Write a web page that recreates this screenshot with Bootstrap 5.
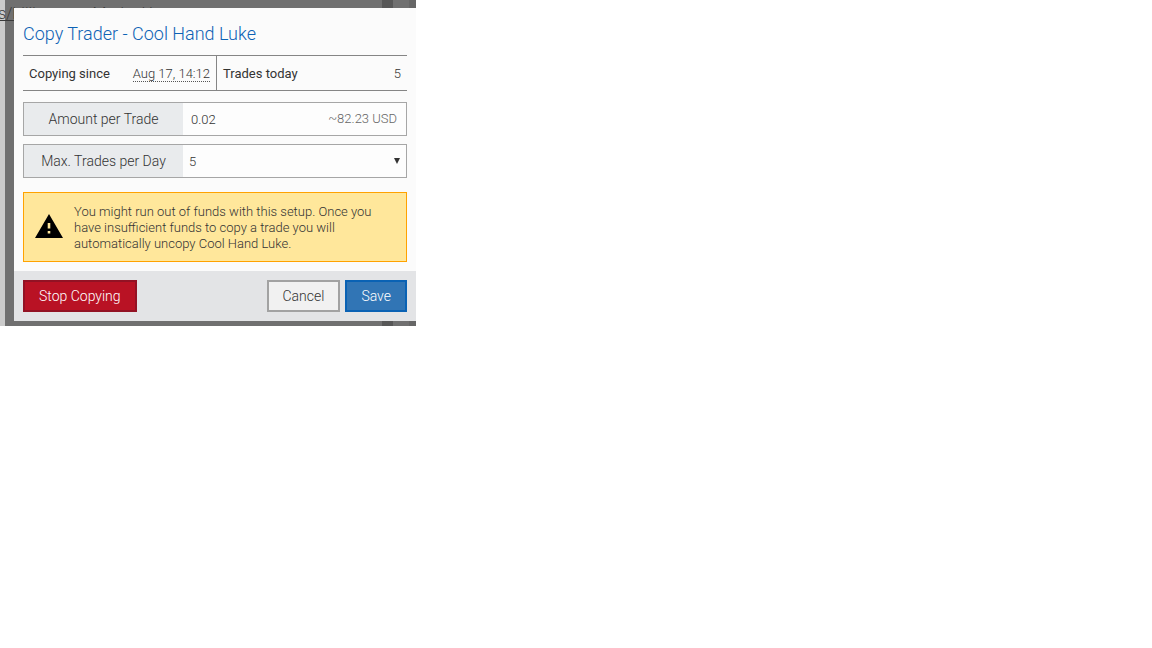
<!DOCTYPE html>
<html lang="en">
<head>
<meta charset="utf-8">
<meta name="viewport" content="width=device-width, initial-scale=1">
<title>Copy Trader</title>
<link href="https://cdn.jsdelivr.net/npm/bootstrap@5.3.0/dist/css/bootstrap.min.css" rel="stylesheet">
<style>
  body { font-family: Roboto, "Liberation Sans", sans-serif; font-size: 13px; line-height: 16px; font-weight: 300; color: #333; background: #fff; }
  .stage { max-width: 416px; padding: 8px 0 5px 14px;
    background: linear-gradient(90deg, #cbcbcb 5px, #707070 5px, #707070 calc(100% - 34px), #575757 calc(100% - 34px), #575757 calc(100% - 23px), #707070 calc(100% - 23px), #707070 calc(100% - 7px), #666 calc(100% - 7px)); }
  .behind { top: 5px; left: -2px; font-size: 16px; line-height: 18px; color: #3a3a3a; }
  .dialog { background: #fbfbfb; }
  .main { padding: 14px 9px 9px; }
  .title { font-size: 18px; line-height: 24px; font-weight: 300; color: #0d62b5; margin-bottom: 9px; }
  .facts { border-top: 1px solid #858585; border-bottom: 1px solid #858585; line-height: 36px; height: 36px; margin-bottom: 11px; }
  .facts dt { font-weight: 400; }
  .facts dd { font-weight: 300; }
  .fact { padding: 0 6px; }
  .fact:first-child { border-right: 1px solid #858585; flex: 0 0 194px; }
  .since { border-bottom: 1px dotted #555; line-height: 15px; margin-top: 2px; }
  .field { border: 1px solid #a6a6a6; height: 34px; margin-bottom: 8px; }
  .field label { width: 159px; background: #e9ebed; font-size: 14px; line-height: 32px; text-align: center; }
  .field input, .field select { border: 0; background: #fdfdfd; font-size: 13px; font-weight: 300; color: #333; line-height: 16px; min-width: 0; border-radius: 0; outline-offset: -2px; }
  .field input { padding: 2px 8px 0; }
  .field select { appearance: none; padding: 2px 6px 0; }
  .usd { background: #fdfdfd; color: #666; line-height: 32px; padding-right: 9px; }
  .arrow { right: 6px; top: 13px; pointer-events: none; }
  .warn { background: #ffe79b; border: 1px solid #ffa200; padding: 11px 12px 9px 11px; margin-top: 14px; gap: 11px; color: #333; }
  .foot { background: #e3e4e6; padding: 9px; gap: 5px; }
  .act { border: 2px solid; border-radius: 0; font-size: 14px; line-height: 16px; font-weight: 300; padding: 6px 14px; }
  .stop, .stop:hover { background: #b91224; border-color: #931224; color: #fff; }
  .cancel, .cancel:hover { background: #f1f1f1; border-color: #a2a2a2; color: #333; }
  .save, .save:hover { background: #3175b5; border-color: #0a62b4; color: #fff; }
</style>
</head>
<body>
<div class="stage position-relative overflow-hidden">
  <a href="#" class="behind position-absolute text-nowrap">s/bilibersons Mader Has</a>
  <form class="dialog position-relative">
    <div class="main">
      <h1 class="title">Copy Trader - Cool Hand Luke</h1>
      <dl class="facts d-flex">
        <div class="fact d-flex justify-content-between"><dt>Copying since</dt><dd class="mb-0 d-flex align-items-center"><span class="since">Aug 17, 14:12</span></dd></div>
        <div class="fact flex-grow-1 d-flex justify-content-between"><dt>Trades today</dt><dd class="mb-0">5</dd></div>
      </dl>
      <div class="field d-flex">
        <label for="amount" class="flex-shrink-0">Amount per Trade</label>
        <input id="amount" type="text" class="flex-grow-1" value="0.02">
        <span class="usd text-nowrap">~82.23 USD</span>
      </div>
      <div class="field d-flex position-relative">
        <label for="max" class="flex-shrink-0">Max. Trades per Day</label>
        <select id="max" class="flex-grow-1"><option>5</option><option>10</option></select>
        <svg class="arrow position-absolute" width="6" height="6" viewBox="0 0 6 6" aria-hidden="true"><path d="M0 0h6L3 6z" fill="#333"/></svg>
      </div>
      <div class="warn d-flex align-items-center" role="alert">
        <svg class="flex-shrink-0 mb-1" width="28" height="24" viewBox="0 0 28 24" aria-hidden="true"><path d="M14 0L28 24H0zM12.700 9v5.500h2.600V9zM12.700 17v2.600h2.600V17z" fill="#000" fill-rule="evenodd"/></svg>
        <div>You might run out of funds with this setup. Once you have insufficient funds to copy a trade you will automatically uncopy Cool Hand Luke.</div>
      </div>
    </div>
    <div class="foot d-flex">
      <button type="button" class="btn act stop me-auto">Stop Copying</button>
      <button type="button" class="btn act cancel">Cancel</button>
      <button type="submit" class="btn act save">Save</button>
    </div>
  </form>
</div>
<script src="https://cdn.jsdelivr.net/npm/bootstrap@5.3.0/dist/js/bootstrap.bundle.min.js"></script>
</body>
</html>
